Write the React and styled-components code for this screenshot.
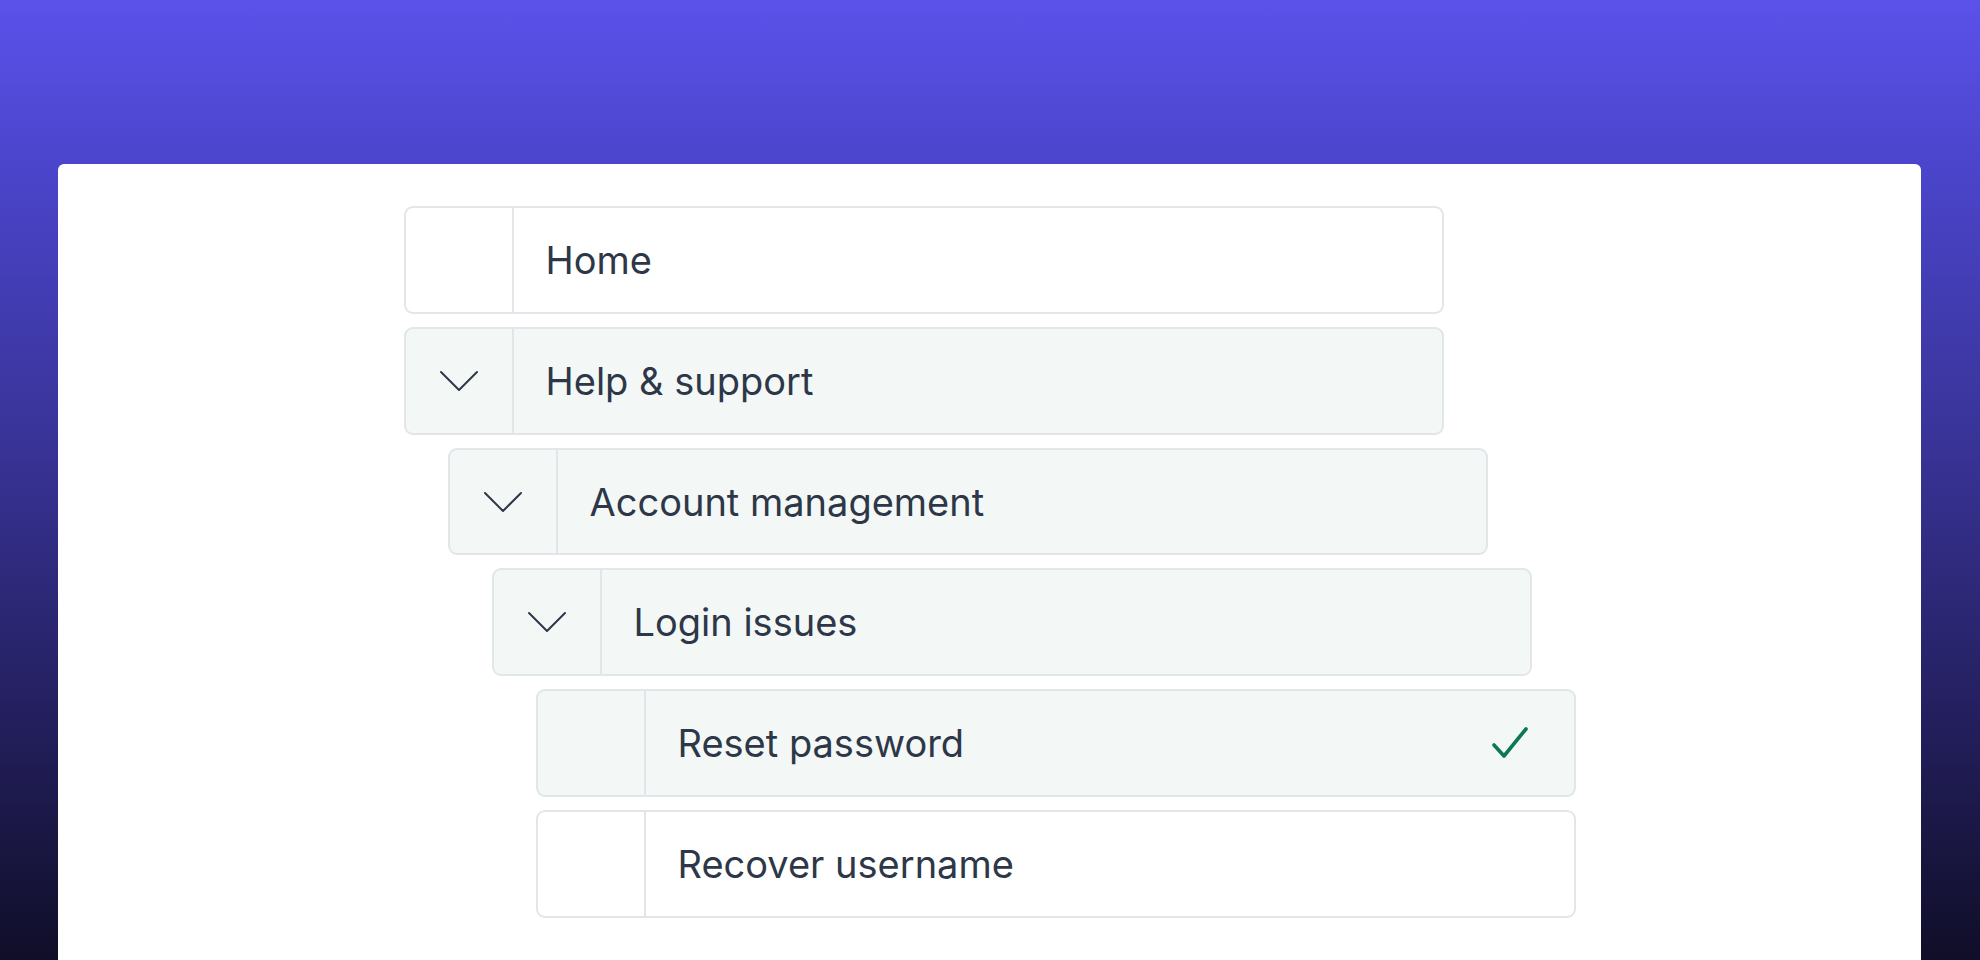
import React from "react";
import styled, { createGlobalStyle } from "styled-components";

const Global = createGlobalStyle`
  html, body { margin: 0; padding: 0; }
  body { font-family: Inter, "Noto Sans", sans-serif; }
  * { box-sizing: border-box; }
`;

const Page = styled.div`
  height: 960px;
  overflow: hidden;
  padding: 164px 59px 0 58px;
  background: linear-gradient(
    180deg,
    #5a52ea 0%,
    #4b45cc 17%,
    #36318f 50%,
    #231f5d 75%,
    #100e28 100%
  );
`;

const Card = styled.main`
  background: #ffffff;
  border-radius: 6px 6px 0 0;
  height: 796px;
  padding: 42px 0;
  display: flex;
  justify-content: center;
`;

const Tree = styled.ul`
  list-style: none;
  margin: 0;
  padding: 0;
  width: 1172px;
  display: flex;
  flex-direction: column;
  gap: 13px;
`;

const Row = styled.li`
  margin-left: ${(p) => p.$level * 44}px;
  width: 1040px;
  height: 108px;
  display: flex;
  align-items: stretch;
  border: 2px solid #e2e5e9;
  border-radius: 9px;
  background: ${(p) => (p.$tinted ? "#f3f8f6" : "#ffffff")};
`;

const IconCell = styled.div`
  width: 108px;
  flex: none;
  border-right: 2px solid #e2e5e9;
  display: flex;
  align-items: center;
  justify-content: center;
  color: #2d3748;
`;

const Label = styled.span`
  flex: 1;
  display: flex;
  align-items: center;
  padding-left: 32px;
  font-size: 38px;
  font-weight: 400;
  color: #2d3748;
`;

const CheckSlot = styled.div`
  display: flex;
  align-items: center;
  padding-right: 45px;
  color: #0b7a54;
`;

const Chevron = () => (
  <svg width="40" height="22" viewBox="0 0 40 22" fill="none">
    <path
      d="M2 2 L20 20 L38 2"
      stroke="currentColor"
      strokeWidth="2"
      strokeLinecap="round"
      strokeLinejoin="round"
    />
  </svg>
);

const Check = () => (
  <svg width="38" height="34" viewBox="0 0 38 34" fill="none">
    <path
      d="M3 19 L13 30 L35 3"
      stroke="currentColor"
      strokeWidth="3.6"
      strokeLinecap="round"
      strokeLinejoin="round"
    />
  </svg>
);

const items = [
  { label: "Home", level: 0, open: false, tinted: false },
  { label: "Help & support", level: 0, open: true, tinted: true },
  { label: "Account management", level: 1, open: true, tinted: true },
  { label: "Login issues", level: 2, open: true, tinted: true },
  { label: "Reset password", level: 3, open: false, tinted: true, checked: true },
  { label: "Recover username", level: 3, open: false, tinted: false },
];

export default function App() {
  return (
    <>
      <Global />
      <Page>
        <Card>
          <Tree>
            {items.map((it) => (
              <Row key={it.label} $level={it.level} $tinted={it.tinted}>
                <IconCell>{it.open ? <Chevron /> : null}</IconCell>
                <Label>{it.label}</Label>
                {it.checked ? (
                  <CheckSlot>
                    <Check />
                  </CheckSlot>
                ) : null}
              </Row>
            ))}
          </Tree>
        </Card>
      </Page>
    </>
  );
}
